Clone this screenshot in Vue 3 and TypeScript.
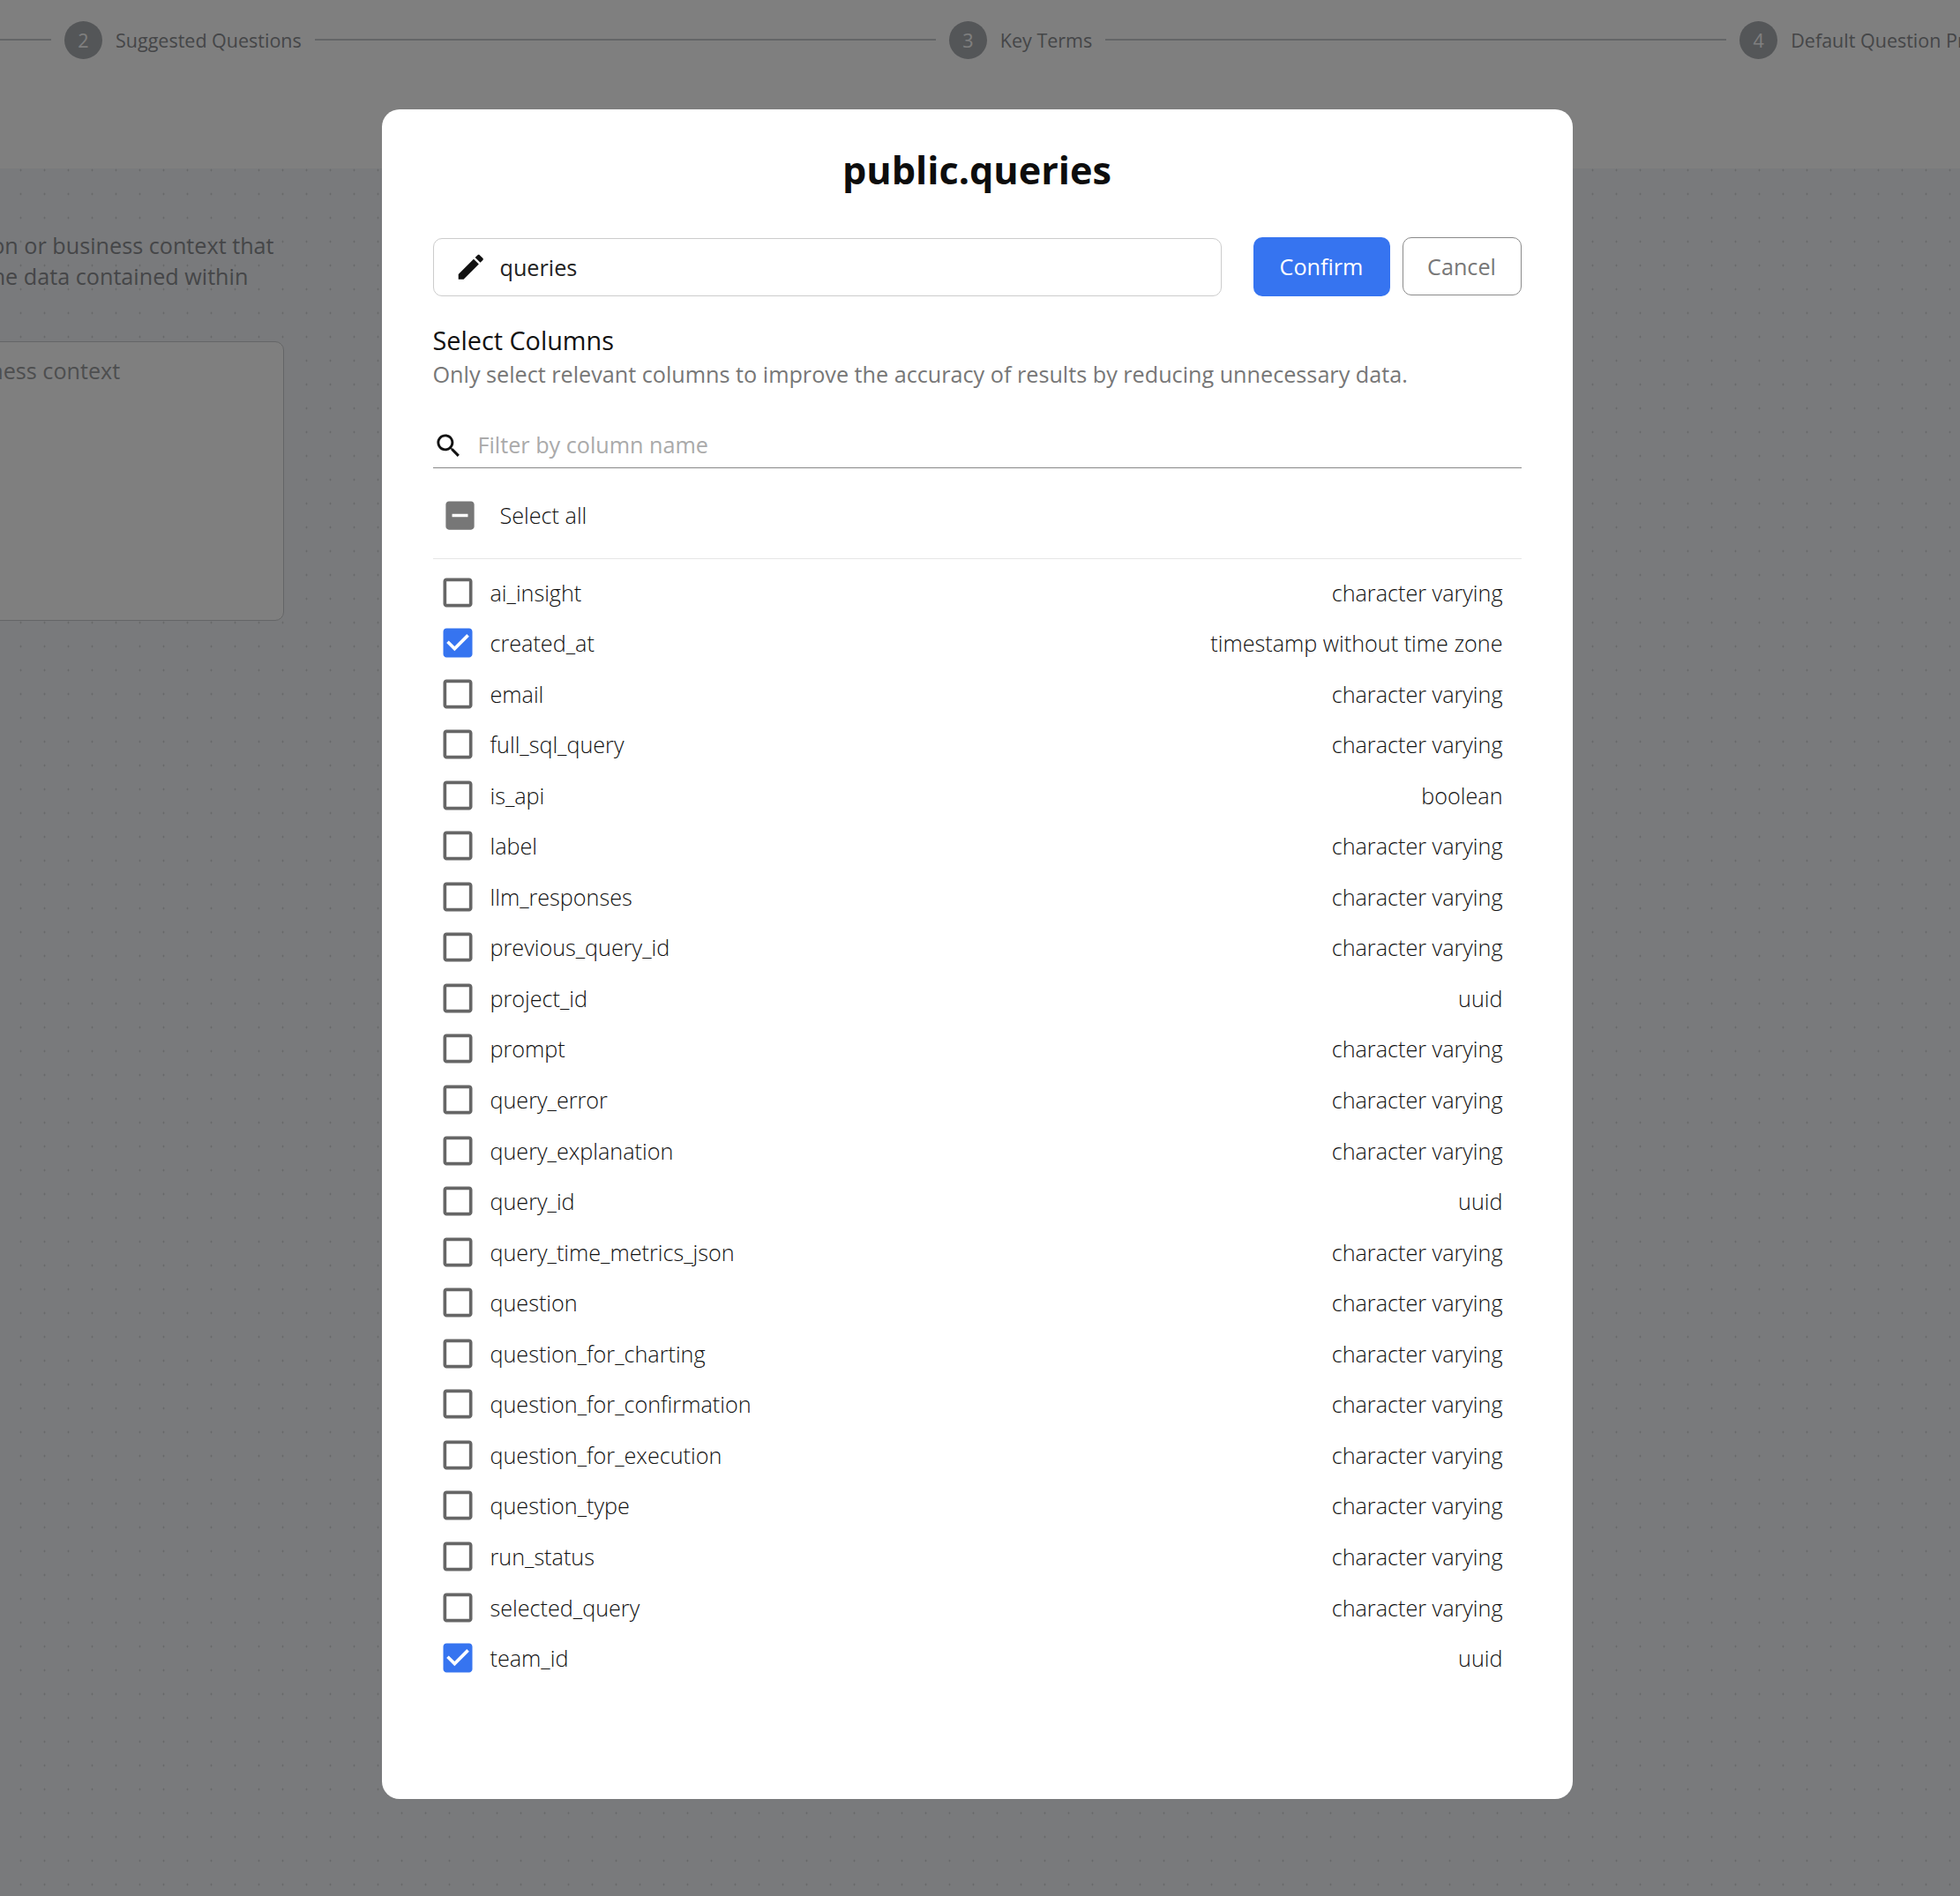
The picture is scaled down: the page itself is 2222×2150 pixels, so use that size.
<script setup lang="ts">
interface Column { name: string; type: string; checked: boolean }
const cv = 'character varying'
const columns: Column[] = [
  { name: 'ai_insight', type: cv, checked: false },
  { name: 'created_at', type: 'timestamp without time zone', checked: true },
  { name: 'email', type: cv, checked: false },
  { name: 'full_sql_query', type: cv, checked: false },
  { name: 'is_api', type: 'boolean', checked: false },
  { name: 'label', type: cv, checked: false },
  { name: 'llm_responses', type: cv, checked: false },
  { name: 'previous_query_id', type: cv, checked: false },
  { name: 'project_id', type: 'uuid', checked: false },
  { name: 'prompt', type: cv, checked: false },
  { name: 'query_error', type: cv, checked: false },
  { name: 'query_explanation', type: cv, checked: false },
  { name: 'query_id', type: 'uuid', checked: false },
  { name: 'query_time_metrics_json', type: cv, checked: false },
  { name: 'question', type: cv, checked: false },
  { name: 'question_for_charting', type: cv, checked: false },
  { name: 'question_for_confirmation', type: cv, checked: false },
  { name: 'question_for_execution', type: cv, checked: false },
  { name: 'question_type', type: cv, checked: false },
  { name: 'run_status', type: cv, checked: false },
  { name: 'selected_query', type: cv, checked: false },
  { name: 'team_id', type: 'uuid', checked: true },
]
</script>

<template>
  <div class="page">
    <header class="stepper">
      <span class="line line-lead"></span>
      <span class="circle">2</span><span class="step-label">Suggested Questions</span>
      <span class="line"></span>
      <span class="circle">3</span><span class="step-label">Key Terms</span>
      <span class="line"></span>
      <span class="circle">4</span><span class="step-label">Default Question Prompts</span>
    </header>
    <main class="canvas">
      <p class="intro">Provide a description or business context that<br />we help interpret the data contained within</p>
      <div class="fake-area">Add a description or business context</div>
    </main>

    <div class="overlay">
      <section class="modal">
        <h1 class="title">public.queries</h1>
        <div class="name-row">
          <label class="name-field">
            <svg class="edit-icon" viewBox="0 0 24 24"><path d="M3 17.25V21h3.75L17.81 9.94l-3.75-3.75L3 17.25zM20.71 7.04c.39-.39.39-1.02 0-1.41l-2.34-2.34c-.39-.39-1.02-.39-1.41 0l-1.83 1.83 3.75 3.75 1.83-1.83z" /></svg>
            <span>queries</span>
          </label>
          <button class="btn btn-confirm">Confirm</button>
          <button class="btn btn-cancel">Cancel</button>
        </div>
        <h2 class="sub">Select Columns</h2>
        <p class="hint">Only select relevant columns to improve the accuracy of results by reducing unnecessary data.</p>
        <div class="filter">
          <svg class="search-icon" viewBox="0 0 24 24"><path d="M15.5 14h-.79l-.28-.27C15.41 12.59 16 11.11 16 9.5 16 5.91 13.09 3 9.5 3S3 5.91 3 9.5 5.91 16 9.5 16c1.61 0 3.09-.59 4.23-1.57l.27.28v.79l5 4.99L20.49 19l-4.99-5zm-6 0C7.01 14 5 11.99 5 9.5S7.01 5 9.5 5 14 7.01 14 9.5 11.99 14 9.5 14z" /></svg>
          <span>Filter by column name</span>
        </div>
        <div class="select-all">
          <svg class="cb-all" viewBox="0 0 24 24"><path d="M19 3H5c-1.1 0-2 .9-2 2v14c0 1.1.9 2 2 2h14c1.1 0 2-.9 2-2V5c0-1.1-.9-2-2-2zm-2 10H7v-2h10v2z" /></svg>
          <span>Select all</span>
        </div>
        <ul class="rows">
          <li v-for="c in columns" :key="c.name" class="row">
            <svg class="cb" :class="{ on: c.checked }" viewBox="0 0 24 24">
              <template v-if="c.checked">
                <rect x="5" y="5" width="14" height="14" fill="#fff" />
                <path d="M19 3H5c-1.11 0-2 .9-2 2v14c0 1.1.89 2 2 2h14c1.11 0 2-.89 2-2V5c0-1.1-.89-2-2-2zm-9 14l-5-5 1.41-1.41L10 14.17l7.59-7.59L19 8l-9 9z" />
              </template>
              <path v-else d="M19 5v14H5V5h14m0-2H5c-1.1 0-2 .9-2 2v14c0 1.1.9 2 2 2h14c1.1 0 2-.9 2-2V5c0-1.1-.9-2-2-2z" />
            </svg>
            <span class="col-name">{{ c.name }}</span>
            <span class="col-type">{{ c.type }}</span>
          </li>
        </ul>
      </section>
    </div>
  </div>
</template>

<style>
html, body { margin: 0; }
</style>

<style scoped>
.page {
  position: relative;
  width: 2222px;
  height: 2150px;
  overflow: hidden;
  background: #fff;
  font-family: "Open Sans", sans-serif;
}
.stepper {
  height: 191px;
  box-sizing: border-box;
  padding: 24px 0 0 0;
  display: flex;
  align-items: flex-start;
  background: #ffffff;
  white-space: nowrap;
}
.line { width: 704px; height: 2px; margin: 20px 15px 0; background: #c9cbce; flex: none; }
.line-lead { width: 58px; margin-left: 0; }
.circle {
  width: 43px; height: 43px; border-radius: 50%; background: #a9acb0; color: #fff;
  font-size: 21.5px; line-height: 43px; text-align: center; flex: none;
}
.step-label { font-size: 21.5px; line-height: 44px; color: #8a8c90; margin-left: 15px; flex: none; }
.canvas {
  height: 1959px;
  background-color: #f3f5f8;
  background-image: radial-gradient(circle, #c6c8cc 0.8px, transparent 1.2px);
  background-size: 27px 27px;
  background-position: 10px 15.5px;
  padding-top: 70px;
  box-sizing: border-box;
}
.intro {
  margin: 0 0 0 -227px;
  font-size: 25.2px;
  line-height: 35px;
  color: #8a8c90;
  white-space: nowrap;
}
.fake-area {
  margin: 56px 0 0 -320px;
  width: 642px;
  height: 317px;
  box-sizing: border-box;
  border: 1px solid #c9cbce;
  border-radius: 10px;
  background: #fff;
  padding: 15px 0 0 14px;
  font-size: 25.2px;
  color: #9b9d9f;
  white-space: nowrap;
}
.overlay {
  position: absolute;
  inset: 0;
  background: rgba(0, 0, 0, 0.5);
  display: flex;
  justify-content: center;
  align-items: flex-start;
  padding-top: 124px;
}
.modal {
  width: 1350px;
  height: 1916px;
  box-sizing: border-box;
  background: #fff;
  border-radius: 20px;
  padding: 36.5px 58px 0;
  margin-left: -7px;
  color: #333;
}
.title {
  margin: 0;
  text-align: center;
  font-size: 43.2px;
  line-height: 64px;
  font-weight: 700;
  color: #0d0d0d;
}
.name-row { display: flex; align-items: center; margin-top: 43.5px; height: 68px; }
.name-field {
  width: 894px;
  height: 66px;
  box-sizing: border-box;
  border: 1.5px solid #ccc;
  border-radius: 10px;
  display: flex;
  align-items: center;
  padding-left: 23px;
  gap: 14.5px;
  font-size: 25.2px;
  color: #222;
  margin-right: 36px;
  margin-top: 1px;
}
.edit-icon { width: 37.5px; height: 37.5px; fill: #111; flex: none; }
.btn {
  font-family: inherit;
  font-size: 25.2px;
  border-radius: 10px;
  box-sizing: border-box;
  padding: 0;
}
.btn-confirm { width: 155px; height: 67px; background: #3674f0; color: #fff; border: none; margin-right: 14px; }
.btn-cancel { width: 135px; height: 66px; background: #fff; color: #777; border: 1.5px solid #8a8a8a; }
.sub { margin: 30px 0 0; font-size: 28.8px; line-height: 40px; font-weight: 400; color: #111; }
.hint { margin: 0; font-size: 25.2px; line-height: 36px; color: #777; }
.filter {
  margin-top: 37px;
  height: 52px;
  display: flex;
  align-items: center;
  gap: 16px;
  border-bottom: 1.5px solid #888;
  font-size: 25.2px;
  color: #aaa;
  padding-bottom: 2px;
  box-sizing: border-box;
}
.search-icon { width: 35px; height: 35px; fill: #111; flex: none; margin-top: 3px; }
.select-all {
  height: 103px;
  box-sizing: border-box;
  display: flex;
  align-items: center;
  padding: 3px 0 0 9px;
  gap: 24px;
  border-bottom: 1.5px solid #e6e6e6;
  font-size: 25.2px;
  font-weight: 300;
  color: #111;
}
.cb-all { width: 43px; height: 43px; fill: #777; flex: none; margin-top: 2px; }
.rows { list-style: none; margin: 8.8px 0 0; padding: 0; }
.row {
  height: 57.55px;
  display: flex;
  align-items: center;
  padding: 0 21px 0 6.5px;
  font-size: 25.2px;
  font-weight: 300;
  color: #111;
}
.cb { width: 44px; height: 44px; fill: #666; flex: none; }
.cb.on { fill: #3674f0; }
.col-name { margin-left: 14.5px; flex: 1; }
</style>
